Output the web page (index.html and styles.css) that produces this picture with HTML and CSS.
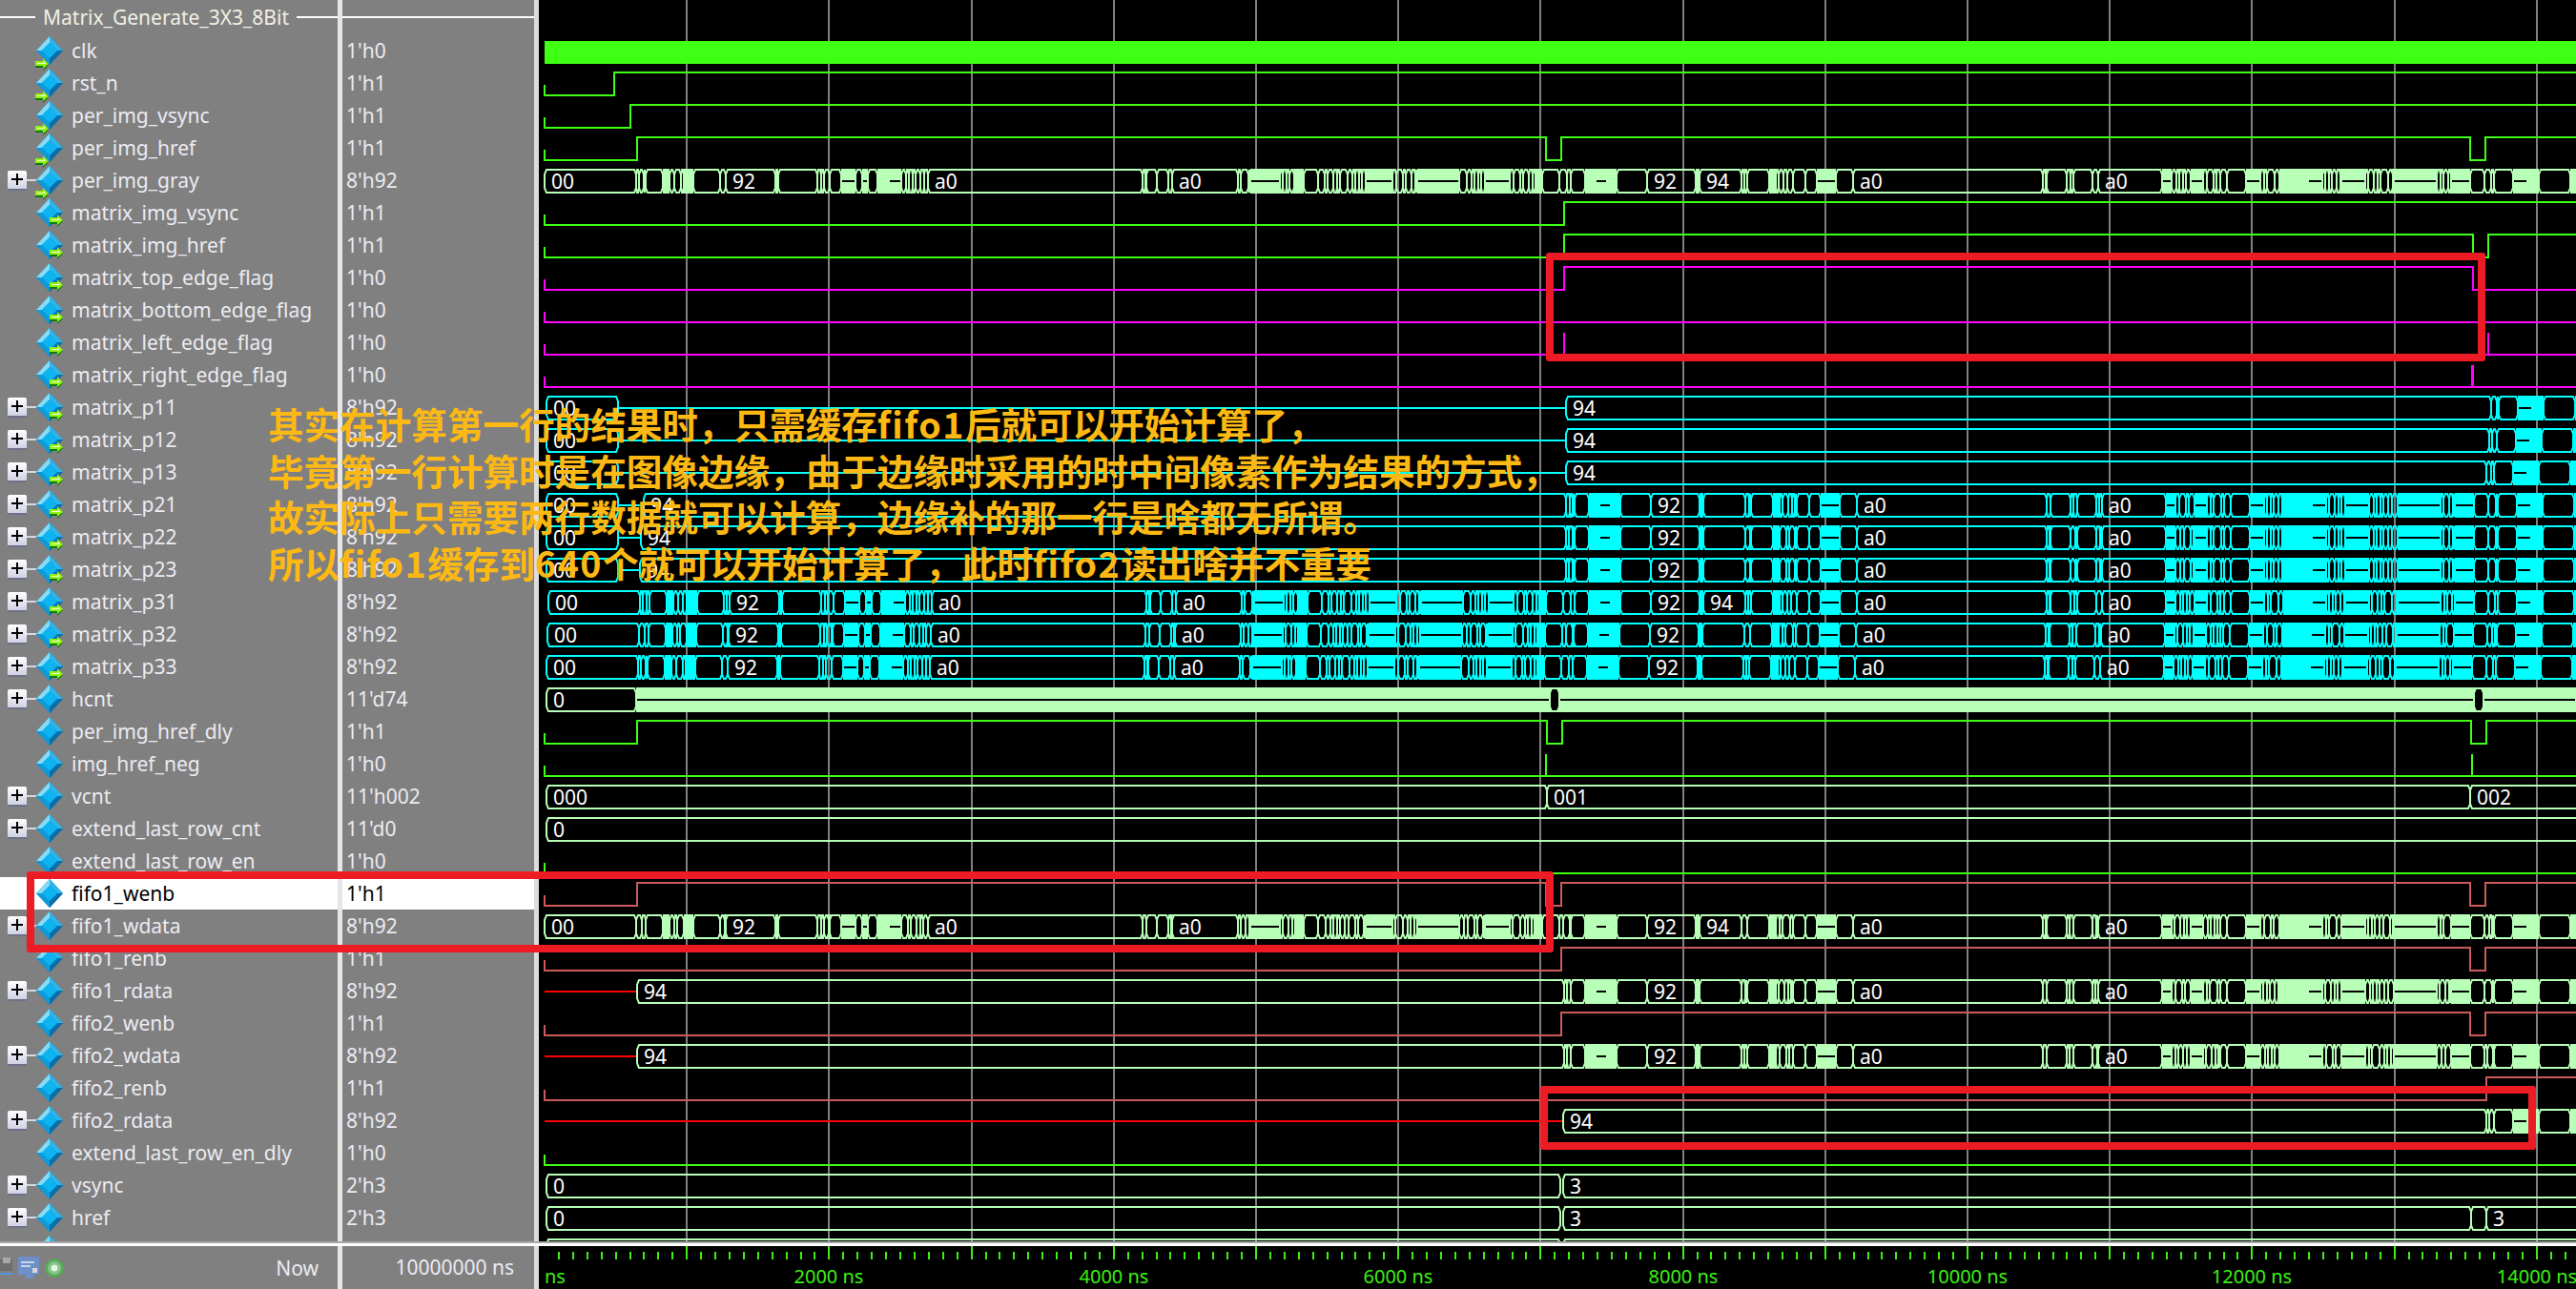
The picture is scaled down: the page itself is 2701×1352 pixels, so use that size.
FILE: index.html
```html
<!DOCTYPE html>
<html lang="en">
<head>
    <meta charset="UTF-8">
    <meta name="viewport" content="width=device-width, initial-scale=1.0">
    <title>Wave - Matrix_Generate_3X3_8Bit</title>
    <link rel="stylesheet" href="styles.css">
</head>
<body>
    <svg class="defs" width="0" height="0">
        <symbol id="diamond" viewBox="0 0 30 30">
            <polygon points="15,0 29,15 15,30 1,15" fill="#0b7fbd"/>
            <polygon points="15,0 1,15 7,15 15,7" fill="#86dcf6"/>
            <polygon points="15,0 15,7 23,15 29,15" fill="#2db5ea"/>
            <polygon points="1,15 15,30 15,23 7,15" fill="#0f9ad8"/>
            <polygon points="29,15 15,30 15,23 23,15" fill="#0a6fa8"/>
            <polygon points="15,7 23,15 15,23 7,15" fill="#0db4f2"/>
        </symbol>
        <symbol id="arrow" viewBox="0 0 15 15">
            <polygon points="0,5 8,5 8,1 14,7 8,13 8,10 0,10" fill="#0c7a14"/>
            <polygon points="0,3 8,3 8,0 14,6 8,11 8,8 0,8" fill="#94f010"/>
            <polygon points="2,5 9,5 9,3 11,6 2,6" fill="#f0ffd0"/>
        </symbol>
    </svg>

    <div class="main">
        <div class="names" id="names">
            <div class="group-head"><span>Matrix_Generate_3X3_8Bit</span></div>
        </div>
        <div class="values" id="values">
            <div class="value-head"></div>
        </div>
        <svg class="wave" id="wave" width="2136" height="1302" viewBox="565 0 2136 1302"></svg>
    </div>

    <div class="split"></div>

    <div class="footer">
        <div class="foot-names">
            <div class="foot-icons">
                <svg width="14" height="22" viewBox="0 0 14 22">
                    <rect x="0" y="2" width="13" height="12" fill="#6e6e6e"/>
                    <rect x="3" y="0" width="8" height="6" fill="#a8a8a8"/>
                    <rect x="0" y="16" width="14" height="2" fill="#5a90e0"/>
                </svg>
                <svg width="22" height="24" viewBox="0 0 22 24">
                    <rect x="0" y="0" width="22" height="19" fill="#6e90c8"/>
                    <rect x="3" y="5" width="14" height="2" fill="#c8d4e8"/>
                    <rect x="3" y="9" width="10" height="2" fill="#c8d4e8"/>
                    <rect x="15" y="12" width="5" height="5" fill="#d8d8d8"/>
                    <rect x="8" y="19" width="8" height="4" fill="#6e90c8"/>
                </svg>
                <svg width="22" height="22" viewBox="0 0 22 22">
                    <circle cx="11" cy="11" r="10" fill="#5aa85a"/>
                    <circle cx="11" cy="11" r="7" fill="#84c484"/>
                    <circle cx="11" cy="11" r="3.5" fill="#e4f4e4"/>
                </svg>
            </div>
            <span class="now">Now</span>
        </div>
        <div class="foot-value">10000000 ns</div>
        <svg class="ruler" id="ruler" width="2136" height="45" viewBox="565 1307 2136 45"></svg>
    </div>

    <div class="note">
        <div>其实在计算第一行的结果时，只需缓存<span class="lat">fifo1</span>后就可以开始计算了，</div>
        <div>毕竟第一行计算时是在图像边缘，由于边缘时采用的时中间像素作为结果的方式，</div>
        <div>故实际上只需要两行数据就可以计算，边缘补的那一行是啥都无所谓。</div>
        <div>所以<span class="lat">fifo1</span>缓存到<span class="lat">640</span>个就可以开始计算了，此时<span class="lat">fifo2</span>读出啥并不重要</div>
    </div>

    <div class="mark mark-flags"></div>
    <div class="mark mark-fifo1"></div>
    <div class="mark mark-fifo2"></div>

    <script src="wave.js"></script>
</body>
</html>
```

FILE: styles.css
```css
body {
    margin: 0;
    width: 2701px;
    height: 1352px;
    overflow: hidden;
    background-color: #000;
    font-family: "Noto Sans", Tahoma, sans-serif;
    font-size: 21px;
    color: #ecebf2;
}

.defs {
    display: block;
    height: 0;
}

.main {
    display: flex;
    height: 1302px;
    overflow: hidden;
}

.names {
    width: 354px;
    flex: none;
    background-color: #808080;
    border-right: 5px solid #e6e6e6;
}

.values {
    width: 201px;
    flex: none;
    background-color: #808080;
    border-right: 5px solid #dcdcdc;
}

.wave {
    display: block;
    flex: none;
}

.group-head {
    height: 36px;
    display: flex;
    align-items: center;
    gap: 8px;
    color: #f2f0e4;
}

.group-head::before,
.group-head::after {
    content: "";
    height: 2px;
    background-color: #fff;
}

.group-head::before {
    width: 37px;
}

.group-head::after {
    flex: 1;
}

.group-head span {
    white-space: nowrap;
}

.value-head {
    height: 36px;
    display: flex;
    align-items: center;
}

.value-head::before {
    content: "";
    flex: 1;
    height: 2px;
    background-color: #fff;
}

.row {
    height: 34px;
    display: flex;
    align-items: center;
    white-space: nowrap;
    line-height: 34px;
}

.row.selected {
    background-color: #fff;
    color: #000;
}

.values .row {
    padding-left: 4px;
}

.plus-slot {
    width: 37px;
    flex: none;
}

.plus {
    position: relative;
    display: block;
    width: 20px;
    height: 21px;
    margin-left: 8px;
    border-radius: 2px;
    border-bottom: 2px solid #6c7088;
    box-sizing: border-box;
    background:
        linear-gradient(#000, #000) center / 12px 2px no-repeat,
        linear-gradient(#000, #000) center / 2px 12px no-repeat,
        linear-gradient(#fff, #d0d2e4);
}

.plus::after {
    content: "";
    position: absolute;
    left: 20px;
    top: 9px;
    width: 10px;
    height: 2px;
    background-color: #d8d8e0;
}

.icon {
    position: relative;
    width: 38px;
    height: 34px;
    flex: none;
}

.icon .gem {
    position: absolute;
    left: 0;
    top: 2px;
    width: 30px;
    height: 30px;
}

.icon .arrow {
    position: absolute;
    width: 15px;
    height: 15px;
}

.icon.in .arrow {
    left: 0;
    top: 25px;
}

.icon.out .arrow {
    left: 15px;
    top: 19px;
}

.split {
    height: 5px;
    box-sizing: border-box;
    background-color: #fff;
    border-top: 2px solid #a8a8a8;
}

.footer {
    display: flex;
    height: 45px;
}

.foot-names {
    width: 354px;
    flex: none;
    display: flex;
    align-items: center;
    justify-content: space-between;
    background-color: #808080;
    border-right: 5px solid #e6e6e6;
}

.foot-icons {
    display: flex;
    align-items: center;
    gap: 5px;
}

.now {
    padding-right: 20px;
}

.foot-value {
    width: 180px;
    flex: none;
    padding-right: 21px;
    line-height: 45px;
    text-align: right;
    background-color: #808080;
    border-right: 5px solid #dcdcdc;
}

.ruler {
    display: block;
    flex: none;
}

.ruler text {
    font-size: 20px;
    fill: #3cf014;
}

.wave text {
    font-size: 21px;
    fill: #fff;
}

.note {
    position: absolute;
    left: 281px;
    top: 420px;
    font-family: "Noto Sans CJK SC", sans-serif;
    font-size: 37.6px;
    font-weight: 700;
    line-height: 48.5px;
    color: #fdb913;
    white-space: nowrap;
}

.lat {
    letter-spacing: 1.5px;
}

.mark {
    position: absolute;
    box-sizing: border-box;
    border: 8px solid #ed1c24;
    border-radius: 3px;
}

.mark-flags {
    left: 1621px;
    top: 265px;
    width: 985px;
    height: 114px;
}

.mark-fifo1 {
    left: 28px;
    top: 914px;
    width: 1601px;
    height: 85px;
}

.mark-fifo2 {
    left: 1615px;
    top: 1139px;
    width: 1044px;
    height: 67px;
}
```

FILE: wave.js
```js
const GREEN = "#3fff14";
const PALE = "#b8ffb8";
const CYAN = "#00ffff";
const PINK = "#ff00ff";
const RED = "#ff0000";
const SALMON = "#cc5a5a";
const END = 2701;

// name, value, arrow (in/out/none), expandable
const signals = [
    ["clk", "1'h0", "in", 0],
    ["rst_n", "1'h1", "in", 0],
    ["per_img_vsync", "1'h1", "in", 0],
    ["per_img_href", "1'h1", "in", 0],
    ["per_img_gray", "8'h92", "in", 1],
    ["matrix_img_vsync", "1'h1", "out", 0],
    ["matrix_img_href", "1'h1", "out", 0],
    ["matrix_top_edge_flag", "1'h0", "out", 0],
    ["matrix_bottom_edge_flag", "1'h0", "out", 0],
    ["matrix_left_edge_flag", "1'h0", "out", 0],
    ["matrix_right_edge_flag", "1'h0", "out", 0],
    ["matrix_p11", "8'h92", "out", 1],
    ["matrix_p12", "8'h92", "out", 1],
    ["matrix_p13", "8'h92", "out", 1],
    ["matrix_p21", "8'h92", "out", 1],
    ["matrix_p22", "8'h92", "out", 1],
    ["matrix_p23", "8'h92", "out", 1],
    ["matrix_p31", "8'h92", "out", 1],
    ["matrix_p32", "8'h92", "out", 1],
    ["matrix_p33", "8'h92", "out", 1],
    ["hcnt", "11'd74", "", 1],
    ["per_img_href_dly", "1'h1", "", 0],
    ["img_href_neg", "1'h0", "", 0],
    ["vcnt", "11'h002", "", 1],
    ["extend_last_row_cnt", "11'd0", "", 1],
    ["extend_last_row_en", "1'h0", "", 0],
    ["fifo1_wenb", "1'h1", "", 0],
    ["fifo1_wdata", "8'h92", "", 1],
    ["fifo1_renb", "1'h1", "", 0],
    ["fifo1_rdata", "8'h92", "", 1],
    ["fifo2_wenb", "1'h1", "", 0],
    ["fifo2_wdata", "8'h92", "", 1],
    ["fifo2_renb", "1'h1", "", 0],
    ["fifo2_rdata", "8'h92", "", 1],
    ["extend_last_row_en_dly", "1'h0", "", 0],
    ["vsync", "2'h3", "", 1],
    ["href", "2'h3", "", 1],
    ["", "", "", 0]
];

// O = open cell, B = busy (many tiny cells), S = solid, M = solid with centre line
const pixels = [
    [571, "O", "00"], [667, "B"], [677, "O"], [695, "S"], [702, "O"], [707, "B"], [717, "S"],
    [727, "O"], [755, "B"], [761, "O", "92"], [813, "S"], [816, "O"], [857, "B"], [870, "O"],
    [882, "M"], [897, "O"], [904, "M"], [910, "O"], [920, "S"], [932, "M"], [945, "B"],
    [973, "O", "a0"], [1198, "B"], [1202, "O"], [1213, "O"], [1225, "B"], [1229, "O", "a0"],
    [1298, "B"], [1311, "M"], [1342, "B"], [1358, "S"], [1367, "O"], [1382, "B"], [1432, "M"],
    [1460, "B"], [1486, "M"], [1530, "B"], [1557, "M"], [1583, "B"], [1610, "S"], [1617, "O"],
    [1635, "B"], [1647, "O"], [1662, "S"], [1673, "M"], [1685, "S"], [1695, "O"],
    [1727, "O", "92"], [1778, "S"], [1782, "O", "94"], [1826, "B"], [1832, "O"], [1855, "S"],
    [1862, "B"], [1880, "O"], [1893, "O"], [1905, "M"], [1925, "O"], [1943, "O", "a0"],
    [2142, "B"], [2146, "O"], [2167, "B"], [2174, "O"], [2194, "B"], [2200, "O", "a0"],
    [2267, "M"], [2277, "B"], [2297, "M"], [2310, "B"], [2328, "O"], [2335, "O"], [2355, "M"],
    [2370, "B"], [2390, "S"], [2420, "M"], [2435, "B"], [2455, "M"], [2480, "B"], [2510, "M"],
    [2555, "B"], [2570, "M"], [2590, "O"], [2605, "B"], [2615, "O"], [2635, "M"], [2650, "S"],
    [2662, "O"], [2695, "S"]
];

const busyWidths = [3, 5, 4, 7, 3, 6, 4, 3, 8, 5, 3, 4];
let busyIndex = 0;
let out = "";

function topOf(row) {
    return 42 + row * 34;
}

function cell(x1, x2, row, color, fill) {
    const t = topOf(row);
    const b = t + 24;
    const c = x2 - x1 < 5 ? 1 : 2;
    const pts = [
        [x1 + c, t], [x2 - c, t], [x2, t + 5], [x2, b - 5],
        [x2 - c, b], [x1 + c, b], [x1, b - 5], [x1, t + 5]
    ];
    out += `<polygon points="${pts.join(" ")}" fill="${fill || "none"}" stroke="${color}" stroke-width="2"/>`;
}

function solid(x1, x2, row, color, line) {
    const t = topOf(row);
    out += `<rect x="${x1}" y="${t - 1}" width="${x2 - x1}" height="26" fill="${color}"/>`;
    if (line) {
        out += `<rect x="${x1 + 1}" y="${t + 11}" width="${x2 - x1 - 2}" height="2" fill="#000"/>`;
    }
}

function label(x, row, text) {
    out += `<text x="${x + 7}" y="${topOf(row) + 20}">${text}</text>`;
}

function segment(x1, x2, kind, row, color, text) {
    if (kind === "O") {
        cell(x1, x2, row, color);
    } else if (kind === "K") {
        cell(x1, x2, row, color, "#000");
    } else if (kind === "S") {
        solid(x1, x2, row, color, false);
    } else if (kind === "M") {
        solid(x1, x2, row, color, true);
    } else {
        let x = x1;
        while (x < x2) {
            const w = busyWidths[busyIndex++ % busyWidths.length];
            const next = Math.min(x + w, x2);
            cell(x, next, row, color);
            x = next;
        }
    }
    if (text) {
        label(x1, row, text);
    }
}

// draws the shared data pattern, shifted by dx and cut to from..to
function pattern(row, color, dx, from, to, hide94) {
    for (let i = 0; i < pixels.length; i++) {
        const start = Math.max(pixels[i][0] + dx, from);
        const stop = Math.min(i + 1 < pixels.length ? pixels[i + 1][0] + dx : END, to);
        if (stop <= start) {
            continue;
        }
        let text = pixels[i][2];
        if (text === "94" && hide94) {
            text = "";
        }
        segment(start, stop, pixels[i][1], row, color, text);
    }
}

function midWire(x1, x2, row, color) {
    out += `<rect x="${x1}" y="${topOf(row) + 11}" width="${x2 - x1}" height="2" fill="${color}"/>`;
}

function digital(row, color, edges) {
    const hi = topOf(row);
    const lo = hi + 24;
    let level = lo;
    let pts = `571,${lo - 11} 571,${lo}`;
    edges.forEach(function (x) {
        pts += ` ${x},${level}`;
        level = level === lo ? hi : lo;
        pts += ` ${x},${level}`;
    });
    pts += ` ${END},${level}`;
    out += `<polyline points="${pts}" fill="none" stroke="${color}" stroke-width="2"/>`;
}

function pulse(row, color, x, width) {
    const lo = topOf(row) + 24;
    out += `<rect x="${x - 1}" y="${lo - 23}" width="${width}" height="23" fill="${color}"/>`;
}

function drawWaves() {
    for (let k = 1; k <= 14; k++) {
        const x = Math.round(571 + k * 149.2);
        out += `<rect x="${x - 1}" y="0" width="2" height="1302" fill="#808080"/>`;
    }

    out += `<rect x="571" y="43" width="2130" height="24" fill="${GREEN}"/>`;
    digital(1, GREEN, [644]);
    digital(2, GREEN, [661]);
    digital(3, GREEN, [668, 1621, 1637, 2590, 2606]);
    pattern(4, PALE, 0, 571, END, false);
    digital(5, GREEN, [1640]);
    digital(6, GREEN, [1640, 2593, 2609]);
    digital(7, PINK, [1640, 2593]);
    digital(8, PINK, []);
    digital(9, PINK, []);
    pulse(9, PINK, 1640, 2);
    pulse(9, PINK, 2609, 2);
    digital(10, PINK, []);
    pulse(10, PINK, 2592, 3);

    // p1x rows only change after the first line of the frame
    [[11, 2612], [12, 2610], [13, 2607]].forEach(function (r) {
        segment(573, 648, "O", r[0], CYAN, "00");
        midWire(648, 1642, r[0], CYAN);
        segment(1642, r[1], "O", r[0], CYAN, "94");
        pattern(r[0], CYAN, r[1] - 2607, r[1], END, true);
    });
    [[14, 675], [15, 672], [16, 671]].forEach(function (r) {
        segment(573, 648, "O", r[0], CYAN, "00");
        midWire(648, r[1], r[0], CYAN);
        segment(r[1], 1642, "O", r[0], CYAN, "94");
        pattern(r[0], CYAN, 4, 1642, END, true);
    });
    pattern(17, CYAN, 4, 573, END, false);
    pattern(18, CYAN, 3, 573, END, true);
    pattern(19, CYAN, 2, 573, END, true);

    segment(573, 667, "O", 20, PALE, "0");
    segment(667, 1625, "M", 20, PALE);
    segment(1625, 1635, "S", 20, PALE);
    segment(1625, 1635, "K", 20, PALE);
    segment(1635, 2594, "M", 20, PALE);
    segment(2594, 2604, "S", 20, PALE);
    segment(2594, 2604, "K", 20, PALE);
    segment(2604, END, "M", 20, PALE);

    digital(21, GREEN, [668, 1622, 1638, 2591, 2607]);
    digital(22, GREEN, []);
    pulse(22, GREEN, 1621, 2);
    pulse(22, GREEN, 2592, 2);

    segment(573, 1622, "O", 23, PALE, "000");
    segment(1622, 2590, "O", 23, PALE, "001");
    segment(2590, END + 5, "O", 23, PALE, "002");
    segment(573, END + 5, "O", 24, PALE, "0");
    digital(25, GREEN, []);

    digital(26, SALMON, [668, 1621, 1637, 2590, 2606]);
    pattern(27, PALE, 0, 571, END, false);
    digital(28, SALMON, [1637, 2590, 2606]);
    midWire(571, 668, 29, RED);
    segment(668, 1640, "O", 29, PALE, "94");
    pattern(29, PALE, 0, 1640, END, true);
    digital(30, SALMON, [1637, 2590, 2606]);
    midWire(571, 668, 31, RED);
    segment(668, 1640, "O", 31, PALE, "94");
    pattern(31, PALE, 0, 1640, END, true);
    digital(32, SALMON, [2607]);
    midWire(571, 1639, 33, RED);
    segment(1639, 2607, "O", 33, PALE, "94");
    pattern(33, PALE, 0, 2607, END, true);
    digital(34, GREEN, []);

    segment(573, 1636, "O", 35, PALE, "0");
    segment(1639, END + 5, "O", 35, PALE, "3");
    segment(573, 1636, "O", 36, PALE, "0");
    segment(1639, 2591, "O", 36, PALE, "3");
    segment(2591, 2607, "O", 36, PALE);
    segment(2607, END + 5, "O", 36, PALE, "3");
    segment(573, 1636, "O", 37, PALE);
    segment(1639, END + 5, "O", 37, PALE);

    document.getElementById("wave").innerHTML = out;
}

function drawRuler() {
    let html = "";
    for (let k = 1; k < 144; k++) {
        const x = Math.round(571 + k * 14.92);
        const major = k % 10 === 0;
        html += `<rect x="${x - 1}" y="${major ? 1307 : 1313}" width="2" height="${major ? 14 : 8}" fill="#3cf014"/>`;
    }
    html += `<text x="571" y="1346">ns</text>`;
    for (let t = 2000; t <= 14000; t += 2000) {
        const x = Math.round(571 + t * 0.1492);
        html += `<text x="${x}" y="1346" text-anchor="middle">${t} ns</text>`;
    }
    document.getElementById("ruler").innerHTML = html;
}

function drawNames() {
    const names = document.getElementById("names");
    const values = document.getElementById("values");
    let nameHtml = "";
    let valueHtml = "";
    signals.forEach(function (s) {
        const selected = s[0] === "fifo1_wenb" ? " selected" : "";
        const plus = s[3] ? '<span class="plus"></span>' : "";
        const arrow = s[2] ? '<svg class="arrow"><use href="#arrow"/></svg>' : "";
        nameHtml += `<div class="row${selected}"><span class="plus-slot">${plus}</span>` +
            `<span class="icon ${s[2]}"><svg class="gem"><use href="#diamond"/></svg>${arrow}</span>` +
            `<span>${s[0]}</span></div>`;
        valueHtml += `<div class="row${selected}">${s[1]}</div>`;
    });
    names.innerHTML += nameHtml;
    values.innerHTML += valueHtml;
}

drawNames();
drawWaves();
drawRuler();
```
